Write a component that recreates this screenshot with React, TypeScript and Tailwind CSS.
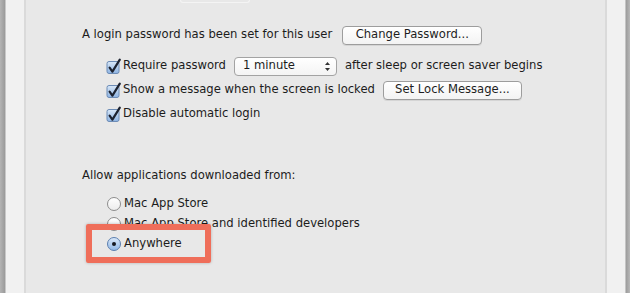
import React from "react";

const Check = () => (
  <svg width="16" height="17" viewBox="0 0 16 17" className="shrink-0">
    <defs>
      <linearGradient id="cb" x1="0" y1="0" x2="0" y2="1">
        <stop offset="0" stopColor="#d9e8f8" />
        <stop offset="1" stopColor="#8db3e2" />
      </linearGradient>
    </defs>
    <rect x="1" y="3.5" width="12" height="12" rx="2" fill="url(#cb)" stroke="#6d8cb6" strokeWidth="1" />
    <path d="M3.6 9.6 L6.4 13.6 L13.8 1.6" stroke="#1c2230" strokeWidth="2.2" fill="none" strokeLinecap="round" strokeLinejoin="round" />
  </svg>
);

const Radio = ({ on }: { on?: boolean }) => (
  <svg width="16" height="16" viewBox="0 0 16 16" className="shrink-0">
    <defs>
      <linearGradient id="ro" x1="0" y1="0" x2="0" y2="1">
        <stop offset="0" stopColor="#ffffff" />
        <stop offset="1" stopColor="#ececec" />
      </linearGradient>
      <linearGradient id="rs" x1="0" y1="0" x2="0" y2="1">
        <stop offset="0" stopColor="#dbe9f9" />
        <stop offset="1" stopColor="#8fb7e6" />
      </linearGradient>
    </defs>
    <circle cx="8" cy="8" r="6.5" fill={on ? "url(#rs)" : "url(#ro)"} stroke={on ? "#5c7fae" : "#8c8c8c"} strokeWidth="1" />
    {on && <circle cx="8" cy="8" r="2" fill="#15181f" />}
  </svg>
);

const Btn = ({ children, w }: { children: React.ReactNode; w: string }) => (
  <div
    className={`${w} h-[19px] shrink-0 flex items-center justify-center rounded-[4px] border border-[#9d9d9d] bg-gradient-to-b from-[#ffffff] to-[#f3f3f3] shadow-[0_1px_0_rgba(0,0,0,0.08)] text-[#1e1e1e]`}
  >
    {children}
  </div>
);

export default function App() {
  return (
    <div className="w-[630px] h-[293px] flex overflow-hidden font-['DejaVu_Sans',sans-serif] text-[11.6px] text-[#1c1c1c] bg-[#e8e8e8]">
      <div className="w-[5px] bg-gradient-to-r from-[#b4b4b4] to-[#9a9a9a]" />
      <div className="w-[1px] bg-[#c8c8c8]" />
      <div className="w-[18px] bg-[#f1f1f1]" />
      <div className="w-[2px] bg-[#dadada]" />
      <div className="flex-1 relative bg-[#e8e8e8]">
        <div className="ml-[154px] w-[70px] h-[3px] border-b border-x border-[#f4f4f4] rounded-b-[3px]" />
        <div className="pl-[56px] pt-[22px]">
          <div className="flex items-center h-[20px]">
            <span>A login password has been set for this user</span>
            <div className="ml-[10px]">
              <Btn w="w-[140px]">Change Password...</Btn>
            </div>
          </div>
          <div className="pl-[24px] mt-[11px]">
            <div className="flex items-center h-[20px]">
              <Check />
              <span className="ml-[1px]">Require password</span>
              <div className="ml-[8px] w-[103px] h-[19px] flex items-center justify-between rounded-[4px] border border-[#a3a3a3] bg-gradient-to-b from-[#ffffff] to-[#f4f4f4] pl-[8px] pr-[5px]">
                <span>1 minute</span>
                <svg width="7" height="11" viewBox="0 0 7 11">
                  <path d="M3.5 1 L6 4 L1 4 Z" fill="#333" />
                  <path d="M3.5 10 L6 7 L1 7 Z" fill="#333" />
                </svg>
              </div>
              <span className="ml-[8px]">after sleep or screen saver begins</span>
            </div>
            <div className="flex items-center h-[20px] mt-[4px]">
              <Check />
              <span className="ml-[1px]">Show a message when the screen is locked</span>
              <div className="ml-[8px]">
                <Btn w="w-[139px]">Set Lock Message...</Btn>
              </div>
            </div>
            <div className="flex items-center h-[20px] mt-[4px]">
              <Check />
              <span className="ml-[1px]">Disable automatic login</span>
            </div>
          </div>
          <div className="flex items-center h-[20px] mt-[42px]">
            <span>Allow applications downloaded from:</span>
          </div>
          <div className="pl-[24px] mt-[8px]">
            <div className="flex items-center h-[20px]">
              <Radio />
              <span className="ml-[2px]">Mac App Store</span>
            </div>
            <div className="flex items-center h-[20px]">
              <Radio />
              <span className="ml-[2px]">Mac App Store and identified developers</span>
            </div>
            <div className="flex items-center h-[20px]">
              <Radio on />
              <span className="ml-[2px]">Anywhere</span>
            </div>
          </div>
        </div>
        <div className="absolute left-[60px] top-[224px] w-[125px] h-[39px] border-[6px] border-[#ef6e5a] rounded-[2px] shadow-[0_0_3px_rgba(0,0,0,0.25)]" />
      </div>
      <div className="w-[2px] bg-[#dadada]" />
      <div className="w-[18px] bg-[#f1f1f1]" />
      <div className="w-[1px] bg-[#c4c4c4]" />
      <div className="w-[4px] bg-gradient-to-r from-[#9c9c9c] to-[#b8b8b8]" />
    </div>
  );
}
